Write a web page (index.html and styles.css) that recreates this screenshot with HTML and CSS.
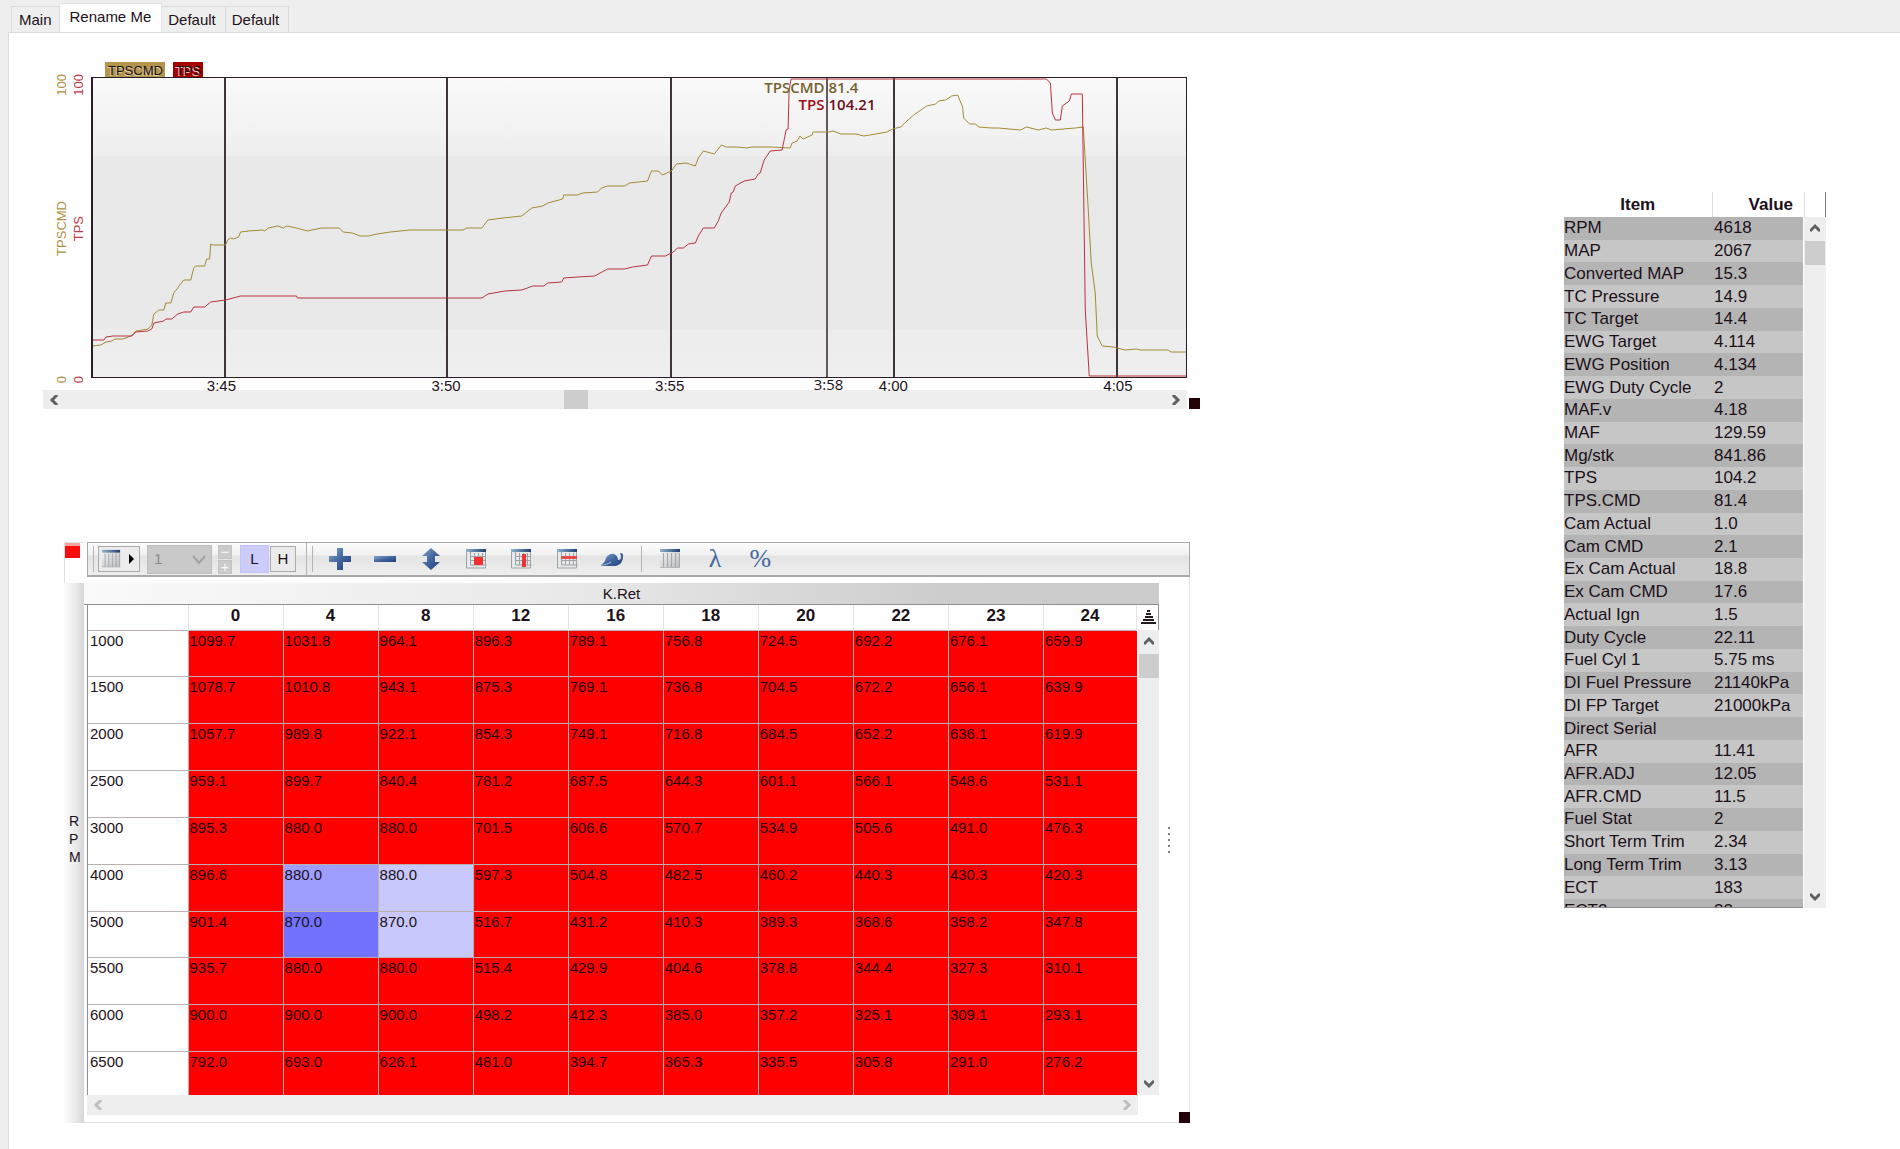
FILE: index.html
```html
<!DOCTYPE html>
<html lang="en">
<head>
<meta charset="utf-8">
<title>Tuner log viewer</title>
<link rel="stylesheet" href="styles.css">
</head>
<body>
<svg class="defs" aria-hidden="true">
  <defs>
    <linearGradient id="blue" x1="0" y1="0" x2="1" y2="1"><stop offset="0" stop-color="#7fa9c9"/><stop offset=".5" stop-color="#42669f"/><stop offset="1" stop-color="#263f78"/></linearGradient>
    <linearGradient id="cap" x1="0" x2="1"><stop offset="0" stop-color="#8fb6cf"/><stop offset="1" stop-color="#1d3f73"/></linearGradient>
    <linearGradient id="grey" x1="0" y1="0" x2="1" y2="1"><stop offset="0" stop-color="#f1f3f4"/><stop offset="1" stop-color="#b9bcbe"/></linearGradient>
    <symbol id="sheet" viewBox="0 0 22 22">
      <path d="M1 3h20v17H1z" fill="url(#grey)"/>
      <path d="M1 1h20v3H1z" fill="url(#cap)"/>
      <path d="M4.500 5v15M8.500 5v15M12.500 5v15M16.500 5v15M20.500 5v15" stroke="#a4a8ab" fill="none"/>
      <path d="M1 19.500h20" stroke="#b5b8ba"/>
    </symbol>
    <symbol id="cells" viewBox="0 0 22 22">
      <path d="M1 2h20v18H1z" fill="#e6e9ea"/>
      <path d="M1 1h20v3H1z" fill="url(#cap)"/>
      <path d="M1.500 4v16h19M5.500 4v13h16M5 8.500h16M5 12.500h16M9.500 5v12M13.500 5v12M17.500 5v12M20.500 4v16" stroke="#9da3a6" fill="none"/>
    </symbol>
    <symbol id="left" viewBox="0 0 10 10"><path d="M8 0 3 5l5 5" fill="none" stroke="currentColor" stroke-width="3"/></symbol>
    <symbol id="right" viewBox="0 0 10 10"><path d="m2 0 5 5-5 5" fill="none" stroke="currentColor" stroke-width="3"/></symbol>
    <symbol id="up" viewBox="0 0 10 10"><path d="m0 8 5-5 5 5" fill="none" stroke="currentColor" stroke-width="3"/></symbol>
    <symbol id="down" viewBox="0 0 10 10"><path d="m0 2 5 5 5-5" fill="none" stroke="currentColor" stroke-width="3"/></symbol>
  </defs>
</svg>

<nav class="tabs">
  <button class="tab">Main</button>
  <button class="tab active">Rename Me</button>
  <button class="tab">Default</button>
  <button class="tab">Default</button>
</nav>

<main class="page">
  <div class="left-column">
    <section class="chart">
      <div class="legend"><span class="chip gold-chip">TPSCMD</span><span class="chip red-chip">TPS</span></div>
      <div class="chart-body">
        <div class="scale gold"><span>100</span><span>TPSCMD</span><span>0</span></div>
        <div class="scale red"><span>100</span><span>TPS</span><span>0</span></div>
        <div class="plot">
          <svg viewBox="92 78 1096 299" preserveAspectRatio="none" aria-label="TPSCMD and TPS over time">
            <path class="grid-line" d="M224 78V377M447 78V377M672 78V377M895 78V377M1119 78V377"/>
            <path class="cursor-line" d="M828 78V377"/>
            <polyline class="trace gold-trace" points="92,346 100,345 105,342 111,341 114,339 122,339 130,336 135,331 147,329 151,325 153,314 158,310 163,310 165,303 170,303 173,293 177,288 179,285 183,280 190,280 193,268 195,266 204,266 206,259 209,259 210,244 212,245 225,245 227,240 230,238 233,239 238,237 240,232 248,231 262,230 264,231 268,228 277,226 283,228 286,226 296,228 307,231 321,228 339,228 343,232 352,233 360,236 368,236 377,234 390,232 410,230 463,230 467,228 482,228 488,220 503,218 522,216 532,208 543,206 548,203 563,199 564,195 578,195 583,193 598,192 602,188 608,186 625,186 630,183 648,181 652,171 659,171 663,175 672,171 677,164 687,163 690,164 696,166 699,158 704,151 715,154 722,145 727,147 738,147 747,148 753,147 772,147 791,148 793,143 798,141 801,136 804,139 813,135 814,132 830,132 834,131 842,134 857,134 865,136 877,134 888,132 894,129 902,127 907,122 915,115 928,106 937,104 940,101 947,100 953,96 959,95 964,107 965,118 971,124 977,124 980,127 993,128 1000,128 1022,130 1028,127 1040,130 1048,128 1053,130 1077,128 1085,127 1087,160 1090,210 1093,263 1097,293 1099,336 1104,346 1115,347 1127,350 1138,349 1143,350 1170,350 1173,352 1188,352"/>
            <polyline class="trace red-trace" points="92,340 103,340 105,337 112,336 131,336 135,332 147,331 151,329 153,323 163,321 165,319 171,319 177,314 183,312 190,312 193,307 204,307 210,302 225,300 240,296 296,296 297,298 482,298 488,294 505,291 522,290 533,286 544,286 548,283 562,282 564,278 578,277 595,276 608,269 625,269 633,267 648,265 652,256 666,256 674,252 678,248 684,248 689,244 696,243 699,236 704,228 715,228 719,221 722,213 730,202 732,193 734,192 736,186 745,181 756,179 759,174 761,173 765,160 771,151 783,150 787,130 789,129 790,90 792,79 1048,79 1052,83 1054,113 1057,120 1062,120 1064,106 1071,101 1073,94 1084,94 1087,310 1091,376 1188,376"/>
          </svg>
          <div class="readout gold-readout" style="left:67.200%"><b>TPSCMD</b><b>81.4</b></div>
          <div class="readout red-readout" style="left:67.200%"><b>TPS</b><b>104.21</b></div>
        </div>
      </div>
      <div class="times">
        <span style="left:11.900%">3:45</span><span style="left:32.400%">3:50</span><span style="left:52.800%">3:55</span><span class="cursor-time" style="left:67.300%">3:58</span><span style="left:73.200%">4:00</span><span style="left:93.700%">4:05</span>
      </div>
      <div class="hbar">
        <button aria-label="Scroll left"><svg><use href="#left"/></svg></button>
        <i class="thumb"></i>
        <button aria-label="Scroll right"><svg><use href="#right"/></svg></button>
      </div>
      <i class="handle"></i>
    </section>

    <section class="map">
      <div class="map-side">
        <div class="flag"><i></i></div>
        <div class="side-label"><span>R</span><span>P</span><span>M</span></div>
      </div>
      <div class="map-main">
        <div class="toolbar">
          <i class="sep first"></i>
          <button class="menu-button" aria-label="Table view"><svg class="icon"><use href="#sheet"/></svg><svg class="caret" viewBox="0 0 6 10"><path d="M0 0l5 5-5 5z"/></svg></button>
          <div class="combo"><select disabled aria-label="Smoothing"><option>1</option></select><svg viewBox="0 0 14 10"><path d="m1 1 6 7 6-7" fill="none" stroke="#a2a2a2" stroke-width="2"/></svg></div>
          <div class="stepper"><button aria-label="Decrease">−</button><button aria-label="Increase">+</button></div>
          <button class="key on">L</button>
          <button class="key">H</button>
          <i class="sep wide"></i><i class="sep"></i>
          <div class="tools seven">
            <button aria-label="Add"><svg class="icon" viewBox="0 0 22 22"><path d="M8 0h6v8h8v6h-8v8H8v-8H0V8h8z" fill="url(#blue)"/></svg></button>
            <button aria-label="Subtract"><svg class="icon" viewBox="0 0 22 22"><path d="M0 8h22v6H0z" fill="url(#blue)"/></svg></button>
            <button aria-label="Adjust"><svg class="icon" viewBox="0 0 22 22"><path d="m11 0 9 8h-5v6h5l-9 8-9-8h5V8H2z" fill="url(#blue)"/></svg></button>
            <button aria-label="Selected cells"><svg class="icon" viewBox="0 0 22 22"><use href="#cells"/><path d="M9 9h9v8H9z" fill="#f33131"/></svg></button>
            <button aria-label="Selected column"><svg class="icon" viewBox="0 0 22 22"><use href="#cells"/><path d="M12 6h4v13h-4z" fill="#f33131"/></svg></button>
            <button aria-label="Selected row"><svg class="icon" viewBox="0 0 22 22"><use href="#cells"/><path d="M5 8h16v3H5z" fill="#e84a4a"/></svg></button>
            <button aria-label="Smooth"><svg class="icon" viewBox="0 0 22 22"><path d="M0 18c1-3 3-3 4-5 1-5 5-8 9-7 3 1 4 4 4 6 2 0 3-1 3-4l-1-3c3 0 4 2 3 5-1 6-5 8-9 8z" fill="url(#blue)"/><path d="M0 17c4 0 7-1 10-3" stroke="#9cc0dc" fill="none"/></svg></button>
          </div>
          <i class="sep mid"></i>
          <div class="tools three">
            <button aria-label="Table"><svg class="icon"><use href="#sheet"/></svg></button>
            <button aria-label="Lambda" class="glyph">λ</button>
            <button aria-label="Percent" class="glyph">%</button>
          </div>
        </div>
        <div class="map-body">
          <div class="axis-title">K.Ret</div>
          <div class="map-frame">
            <div class="map-view">
              <table class="grid">
                <colgroup><col class="row-head"><col><col><col><col><col><col><col><col><col><col class="last"></colgroup>
                <thead><tr><th></th><th>0</th><th>4</th><th>8</th><th>12</th><th>16</th><th>18</th><th>20</th><th>22</th><th>23</th><th>24</th></tr></thead>
                <tbody>
                  <tr><th>1000</th><td>1099.7</td><td>1031.8</td><td>964.1</td><td>896.3</td><td>789.1</td><td>756.8</td><td>724.5</td><td>692.2</td><td>676.1</td><td>659.9</td></tr>
                  <tr><th>1500</th><td>1078.7</td><td>1010.8</td><td>943.1</td><td>875.3</td><td>769.1</td><td>736.8</td><td>704.5</td><td>672.2</td><td>656.1</td><td>639.9</td></tr>
                  <tr><th>2000</th><td>1057.7</td><td>989.8</td><td>922.1</td><td>854.3</td><td>749.1</td><td>716.8</td><td>684.5</td><td>652.2</td><td>636.1</td><td>619.9</td></tr>
                  <tr><th>2500</th><td>959.1</td><td>899.7</td><td>840.4</td><td>781.2</td><td>687.5</td><td>644.3</td><td>601.1</td><td>566.1</td><td>548.6</td><td>531.1</td></tr>
                  <tr><th>3000</th><td>895.3</td><td>880.0</td><td>880.0</td><td>701.5</td><td>606.6</td><td>570.7</td><td>534.9</td><td>505.6</td><td>491.0</td><td>476.3</td></tr>
                  <tr><th>4000</th><td>896.6</td><td class="warm">880.0</td><td class="cool">880.0</td><td>597.3</td><td>504.8</td><td>482.5</td><td>460.2</td><td>440.3</td><td>430.3</td><td>420.3</td></tr>
                  <tr><th>5000</th><td>901.4</td><td class="hot">870.0</td><td class="cool">870.0</td><td>516.7</td><td>431.2</td><td>410.3</td><td>389.3</td><td>368.6</td><td>358.2</td><td>347.8</td></tr>
                  <tr><th>5500</th><td>935.7</td><td>880.0</td><td>880.0</td><td>515.4</td><td>429.9</td><td>404.6</td><td>378.8</td><td>344.4</td><td>327.3</td><td>310.1</td></tr>
                  <tr><th>6000</th><td>900.0</td><td>900.0</td><td>900.0</td><td>498.2</td><td>412.3</td><td>385.0</td><td>357.2</td><td>325.1</td><td>309.1</td><td>293.1</td></tr>
                  <tr><th>6500</th><td>792.0</td><td>693.0</td><td>626.1</td><td>481.0</td><td>394.7</td><td>365.3</td><td>335.5</td><td>305.8</td><td>291.0</td><td>276.2</td></tr>
                </tbody>
              </table>
            </div>
            <div class="map-scroll">
              <button class="corner" aria-label="Sort"><svg viewBox="0 0 15 15"><path d="M6 1h3M5 4h5M4 7h8M2 10h11M0 13h15" stroke="#241a20" stroke-width="2"/></svg></button>
              <div class="vbar">
                <button aria-label="Scroll up"><svg><use href="#up"/></svg></button>
                <i class="thumb"></i>
                <button aria-label="Scroll down"><svg><use href="#down"/></svg></button>
              </div>
            </div>
          </div>
          <div class="hbar idle">
            <button aria-label="Scroll left"><svg><use href="#left"/></svg></button>
            <button aria-label="Scroll right"><svg><use href="#right"/></svg></button>
          </div>
          <div class="dots"><i></i><i></i><i></i><i></i><i></i></div>
        </div>
      </div>
      <i class="handle"></i>
    </section>
  </div>

  <aside class="values">
    <div class="values-view">
      <table class="list">
        <thead><tr><th>Item</th><th>Value</th></tr></thead>
        <tbody>
          <tr><td>RPM</td><td>4618</td></tr>
          <tr><td>MAP</td><td>2067</td></tr>
          <tr><td>Converted MAP</td><td>15.3</td></tr>
          <tr><td>TC Pressure</td><td>14.9</td></tr>
          <tr><td>TC Target</td><td>14.4</td></tr>
          <tr><td>EWG Target</td><td>4.114</td></tr>
          <tr><td>EWG Position</td><td>4.134</td></tr>
          <tr><td>EWG Duty Cycle</td><td>2</td></tr>
          <tr><td>MAF.v</td><td>4.18</td></tr>
          <tr><td>MAF</td><td>129.59</td></tr>
          <tr><td>Mg/stk</td><td>841.86</td></tr>
          <tr><td>TPS</td><td>104.2</td></tr>
          <tr><td>TPS.CMD</td><td>81.4</td></tr>
          <tr><td>Cam Actual</td><td>1.0</td></tr>
          <tr><td>Cam CMD</td><td>2.1</td></tr>
          <tr><td>Ex Cam Actual</td><td>18.8</td></tr>
          <tr><td>Ex Cam CMD</td><td>17.6</td></tr>
          <tr><td>Actual Ign</td><td>1.5</td></tr>
          <tr><td>Duty Cycle</td><td>22.11</td></tr>
          <tr><td>Fuel Cyl 1</td><td>5.75 ms</td></tr>
          <tr><td>DI Fuel Pressure</td><td>21140kPa</td></tr>
          <tr><td>DI FP Target</td><td>21000kPa</td></tr>
          <tr><td>Direct Serial</td><td></td></tr>
          <tr><td>AFR</td><td>11.41</td></tr>
          <tr><td>AFR.ADJ</td><td>12.05</td></tr>
          <tr><td>AFR.CMD</td><td>11.5</td></tr>
          <tr><td>Fuel Stat</td><td>2</td></tr>
          <tr><td>Short Term Trim</td><td>2.34</td></tr>
          <tr><td>Long Term Trim</td><td>3.13</td></tr>
          <tr><td>ECT</td><td>183</td></tr>
          <tr><td>ECT2</td><td>32</td></tr>
        </tbody>
      </table>
    </div>
    <div class="values-scroll">
      <div class="cap"></div>
      <div class="vbar">
        <button aria-label="Scroll up"><svg><use href="#up"/></svg></button>
        <i class="thumb"></i>
        <button aria-label="Scroll down"><svg><use href="#down"/></svg></button>
      </div>
    </div>
  </aside>
</main>
</body>
</html>
```
FILE: styles.css
```css
* { box-sizing: border-box; }

body {
  margin: 0;
  min-height: 100vh;
  display: flex;
  flex-direction: column;
  background: #eeeeee;
  color: #1c1019;
  font: 15px/20px "Liberation Sans", Arial, sans-serif;
}

button {
  margin: 0;
  padding: 0;
  border: 0;
  background: none;
  color: inherit;
  font: inherit;
}

.defs { position: absolute; width: 0; height: 0; }

/* Tabs */
.tabs {
  display: flex;
  align-items: flex-end;
  height: 32px;
  padding-left: 11px;
}
.tab {
  height: 26px;
  padding: 0 9px 0 6px;
  border: 1px solid #dcdcdc;
  border-width: 1px 1px 0 0;
}
.tab:first-child { padding: 0 7px; border-left-width: 1px; }
.tab.active {
  height: 30px;
  margin-bottom: -1px;
  padding: 0 10px 4px;
  border-color: #e4e4e4;
  background: #fff;
}

/* Page */
.page {
  flex: 1;
  display: grid;
  grid-template-columns: minmax(0, 1157fr) minmax(0, 364fr) 262px;
  align-items: start;
  margin-left: 8px;
  padding: 29px 74px 20px 34px;
  border: 1px solid #dcdcdc;
  border-width: 1px 0 0 1px;
  background: #fff;
}

.handle {
  position: absolute;
  right: 0;
  bottom: 0;
  width: 11px;
  height: 11px;
  background: #220207;
}

/* Scroll bars */
.hbar, .vbar {
  display: flex;
  align-items: center;
  justify-content: space-between;
  background: #eeeeee;
  color: #606060;
}
.hbar { height: 19px; padding: 0 6px; }
.vbar { flex: 1; flex-direction: column; padding: 6px 0; }
.hbar svg, .vbar svg { display: block; width: 10px; height: 10px; }
.hbar.idle { color: #bfbfbf; }
.thumb { background: #cdcdcd; }
.hbar .thumb { width: 24px; height: 19px; margin-right: auto; margin-left: calc(44% + 7px); }
.vbar .thumb { width: 20px; height: 24px; margin-top: 8px; margin-bottom: auto; }

/* Chart */
.chart { position: relative; padding-right: 13px; }
.legend { display: flex; gap: 8px; padding-left: 62px; }
.chip {
  height: 15px;
  padding: 0 2px 0 3px;
  font-size: 13px;
  line-height: 17px;
  text-shadow: -1px 1px 0 #fff8;
}
.gold-chip { background: #b3964c; }
.red-chip { background: #a50000; text-shadow: -1px 1px 0 #fffc; }

.chart-body { display: flex; padding-left: 10px; }
.scale {
  display: grid;
  grid-template-rows: 1fr auto 1fr;
  justify-items: center;
  width: 17px;
  margin: -3px 0 -5px;
  font-size: 13px;
  line-height: 17px;
}
.scale span { writing-mode: vertical-rl; transform: rotate(180deg); }
.scale span:first-child { align-self: start; }
.scale span:last-child { align-self: end; }
.scale.gold { color: #ad9142; }
.scale.red { color: #c23a44; }

.plot {
  position: relative;
  flex: 1;
  height: 301px;
  margin-left: 4px;
  border: 1px solid #2b1d27;
  border-left-width: 2px;
  background: linear-gradient(#fafafa, #eeeeee 26%, #e9e9e9 26%, #e9e9e9 84%, #ececec 84%, #efefef);
}
.plot svg { display: block; width: 100%; height: 100%; }
.plot path, .plot polyline { fill: none; vector-effect: non-scaling-stroke; }
.grid-line { stroke: #40353e; stroke-width: 2; shape-rendering: crispEdges; }
.cursor-line { stroke: #62585e; stroke-width: 2; shape-rendering: crispEdges; }
.trace { stroke-width: 1; }
.gold-trace { stroke: #a68935; }
.red-trace { stroke: #b8343c; }

.readout {
  position: absolute;
  display: grid;
  grid-template-columns: 100px 100px;
  column-gap: 4px;
  margin-left: -103px;
  font: 600 15px/17px "Open Sans", sans-serif;
}
.readout b { font-weight: 600; }
.readout b:first-child { text-align: right; }
.gold-readout { top: 1px; color: #75622f; }
.red-readout { top: 18px; color: #6b101b; }
.red-readout b:first-child { color: #a30a14; }

.times { position: relative; height: 12px; margin-left: 48px; }
.times span { position: absolute; top: -1px; line-height: 17px; transform: translateX(-50%); z-index: 1; }
.times .cursor-time { top: -2px; font-family: "Open Sans", sans-serif; }

/* Map editor */
.map {
  position: relative;
  display: flex;
  gap: 3px;
  margin: 133px 10px 0 21px;
}
.map-side { display: flex; flex-direction: column; width: 20px; }
.flag {
  height: 41px;
  border: 1px solid #e0e0e0;
  border-width: 1px 0 0 1px;
}
.flag i {
  display: block;
  width: 15px;
  height: 15px;
  background: linear-gradient(#f7a0a0 20%, #f80d0d 20%);
}
.side-label {
  flex: 1;
  display: flex;
  flex-direction: column;
  justify-content: center;
  padding: 0 0 28px 5px;
  background: linear-gradient(90deg, #fdfdfd, #e9e9e9 60%, #d6d6d6);
  font-size: 14px;
  line-height: 18px;
}

.map-main { flex: 1; min-width: 0; }
.toolbar {
  display: flex;
  align-items: center;
  height: 35px;
  border: 1px solid #a8a8a8;
  border-bottom-width: 2px;
  background: linear-gradient(#fcfcfc, #f1f1f1 38%, #e4e4e4 40%, #eeeeee);
}
.sep { width: 1px; height: 26px; margin-right: 4px; background: #b4b4b4; }
.sep.first { margin-left: 5px; }
.sep.wide { height: 32px; margin-left: 10px; margin-right: 5px; }
.sep.mid { margin: 0 5px 0 6px; }
.icon { width: 22px; height: 22px; display: block; }

.menu-button {
  display: flex;
  align-items: center;
  gap: 8px;
  width: 42px;
  height: 26px;
  padding-left: 2px;
  border: 1px solid #a9a9a9;
  background: #ececec;
}
.menu-button .icon { width: 20px; height: 20px; }
.caret { width: 6px; height: 10px; }

.combo { position: relative; margin-left: 7px; }
.combo select {
  display: block;
  appearance: none;
  width: 65px;
  height: 29px;
  padding: 0 6px;
  border: 1px solid #bdbdbd;
  border-radius: 0;
  background: #c9c9c9;
  color: #8a8a8a;
  opacity: 1;
  font: inherit;
}
.combo svg { position: absolute; right: 6px; top: 10px; width: 14px; height: 10px; }

.stepper { display: grid; gap: 1px; margin: 0 8px 0 6px; }
.stepper button {
  width: 14px;
  height: 14px;
  border: 1px solid #c4c4c4;
  background: #cbcbcb;
  color: #f8f8f8;
  line-height: 12px;
}
.key { width: 26px; height: 26px; border: 1px solid #ababab; background: #ebebeb; }
.key.on { width: 29px; height: 28px; margin-right: 1px; border-color: #c3c3fb; background: #ccccfa; }

.tools { display: flex; min-width: 0; }
.tools.seven { width: 318px; }
.tools.three { width: 136px; }
.tools button { flex: 1; display: flex; align-items: center; justify-content: center; }
.glyph { color: #41669c; font: 26px/26px "Liberation Serif", serif; }

.map-body {
  position: relative;
  margin-left: -3px;
  padding: 6px 30px 7px 3px;
  border: 1px solid #e2e2e2;
  border-width: 0 1px 1px 0;
}
.axis-title {
  height: 22px;
  margin-left: -3px;
  border-bottom: 1px solid #8c9096;
  background: linear-gradient(90deg, #fafafa, #e9e9e9 45%, #cdcdcd 80%, #cbcbcb);
  line-height: 22px;
  text-align: center;
}
.map-frame { display: flex; }
.map-view {
  flex: 1;
  height: 490px;
  overflow: hidden;
  border-left: 1px solid #8c9096;
}
.grid { width: 100%; height: 494px; table-layout: fixed; border-collapse: collapse; }
.grid .row-head { width: 100px; }
.grid .last { width: 93px; }
.grid thead tr { height: 25px; }
.grid th, .grid td {
  padding: 0 2px;
  vertical-align: top;
  text-align: left;
  font-weight: 400;
}
.grid tbody th, .grid td { border: 1px solid #b9b0b0; }
.grid tbody th { border-left: 0; }
.grid td { padding-left: 1px; background: #ff0000; color: #200000; }
.grid td:last-child { border-right: 0; }
.grid thead th {
  padding: 0;
  border-right: 1px solid #e4e4e4;
  font-size: 17px;
  font-weight: 700;
  line-height: 22px;
  text-align: center;
}
.grid td.warm { background: #9e9eff; color: #1c1019; }
.grid td.hot { background: #7272ff; color: #1c1019; }
.grid td.cool { background: #c8c8fd; color: #1c1019; }

.map-scroll { display: flex; flex-direction: column; width: 21px; margin-left: 1px; }
.corner {
  display: grid;
  place-items: center;
  height: 25px;
  border-right: 1px solid #8c9096;
}
.corner svg { width: 15px; height: 15px; }
.map-body .hbar { height: 20px; margin-right: 21px; }

.dots {
  position: absolute;
  right: 19px;
  top: 250px;
  display: grid;
  gap: 4px;
}
.dots i { width: 2px; height: 2px; background: #7d8088; }

/* Live values */
.values {
  display: flex;
  grid-column: 3;
  height: 716px;
  margin-top: 130px;
  font-size: 17px;
}
.values-view { flex: 1; overflow: hidden; border-bottom: 1px solid #909090; }
.list { width: 100%; height: 730px; table-layout: fixed; border-collapse: collapse; }
.list thead tr { height: 25px; }
.list th, .list td { padding: 0; line-height: 20px; white-space: nowrap; }
.list th:first-child { width: 148px; border-right: 1px solid #e0e0e0; }
.list th:last-child { padding-right: 10px; text-align: right; }
.list tbody tr { background: #c6c6c6; }
.list tbody tr:nth-child(odd) { background: #b4b4b4; }
.list td + td { padding-left: 2px; }
.values-scroll { display: flex; flex-direction: column; width: 23px; padding-left: 1px; }
.cap { height: 25px; border: 1px solid #e0e0e0; border-width: 0 1px; border-right-color: #7c7c7c; }
```
